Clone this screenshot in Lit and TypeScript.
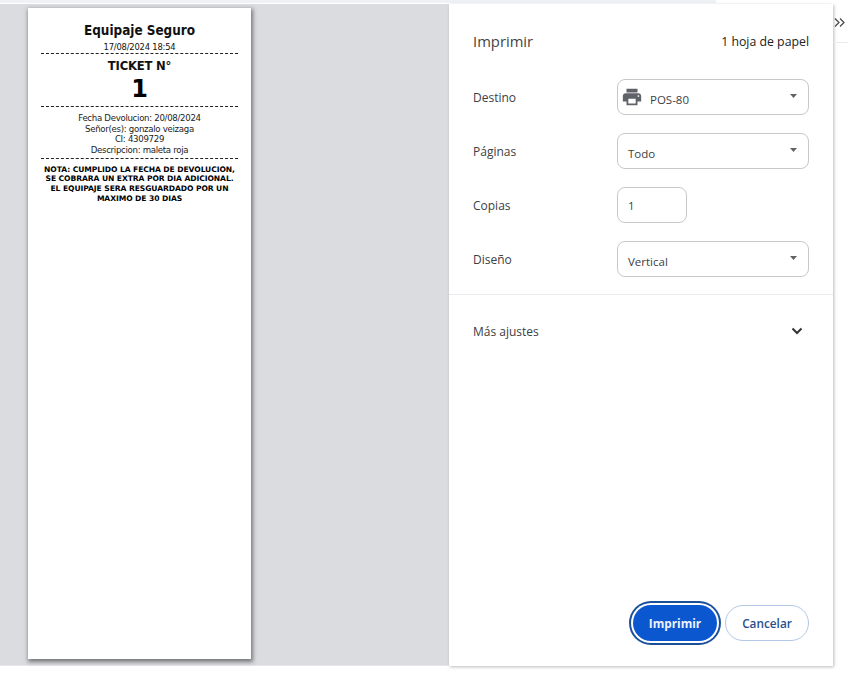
import { LitElement, html, css, svg } from "lit";
import { customElement } from "lit/decorators.js";

const arrow = svg`<svg class="arrow" width="7" height="4" viewBox="0 0 7 4"><path d="M0 0h7L3.5 4z" fill="#5f6368"/></svg>`;

@customElement("app-root")
export class AppRoot extends LitElement {
  static styles = css`
    :host { display: block; width: 848px; height: 673px; background: #fff; overflow: hidden; position: relative; font-family: "Open Sans", "Noto Sans", sans-serif; }
    .topstrip { height: 3px; width: 716px; background: #eef1f6; }
    .main { display: flex; height: 663px; margin-top: 1px; }
    .preview { width: 449px; height: 662px; background: #dadce0; padding: 4px 0 0 28px; box-sizing: border-box; border-bottom: 1px solid #e6e7ea; }
    .paper { width: 223px; height: 651px; background: #fff; box-shadow: 1px 2px 4px 1px rgba(40,40,40,.55); padding-top: 14px; box-sizing: border-box; font-family: "DejaVu Sans", sans-serif; color: #111; text-align: center; }
    .t-title { font-family: "DejaVu Sans Condensed", "DejaVu Sans", sans-serif; font-stretch: condensed; font-size: 13.4px; font-weight: 700; line-height: 18px; }
    .t-date { font-size: 8.4px; line-height: 12px; margin-top: 1px; letter-spacing: -.2px; }
    .dash { border-top: 1px dashed #222; margin: 0 13px; }
    .t-ticket { font-size: 11.6px; font-weight: 700; line-height: 14px; margin-top: 5px; letter-spacing: -.2px; }
    .t-num { font-size: 24px; font-weight: 700; line-height: 28px; margin-top: 2px; margin-bottom: 3px; color: #000; }
    .t-info { font-size: 8.6px; line-height: 10.67px; margin: 6px 0 2px; letter-spacing: -.3px; color: #222; }
    .t-note { font-size: 7.6px; font-weight: 700; line-height: 9.7px; margin-top: 6px; color: #000; letter-spacing: -.08px; }
    .panel { width: 384px; height: 662px; background: #fff; box-shadow: 1px 1px 3px rgba(60,60,60,.35); display: flex; flex-direction: column; box-sizing: border-box; color: #3c4043; font-size: 12px; }
    .head { display: flex; justify-content: space-between; align-items: center; padding: 0 24px; height: 22px; margin-top: 26px; }
    .head h1 { margin: 0; font-size: 14.8px; font-weight: 400; color: #444; }
    .head span { font-size: 12.3px; font-weight: 500; color: #222; }
    .rows { display: flex; flex-direction: column; gap: 18px; padding: 27px 24px 17px; border-bottom: 1px solid #e8eaed; }
    .row { display: flex; align-items: center; height: 36px; }
    .row label { width: 144px; flex: none; }
    .field { height: 34px; border: 1px solid #c6c8cc; border-radius: 8px; display: flex; align-items: center; padding: 0 10px; box-sizing: content-box; width: 170px; color: #3c4043; position: relative; }
    .field .val { padding-top: 5px; font-size: 11.5px; }
    .field.small { width: 48px; }
    .field.small .val { padding-top: 0; }
    .printer { margin-right: 7px; margin-left: -7px; flex: none; }
    .arrow { position: absolute; right: 11px; top: 14px; }
    .more { display: flex; justify-content: space-between; align-items: center; padding: 0 30px 0 24px; margin-top: 24px; height: 24px; }
    .spacer { flex: 1; }
    .buttons { display: flex; justify-content: flex-end; align-items: center; gap: 8px; padding: 0 24px 25px; }
    .btn { height: 36px; border-radius: 18px; box-sizing: border-box; display: flex; align-items: center; justify-content: center; font-size: 11.8px; font-weight: 700; }
    .primary { width: 84px; background: #0b57d0; color: #eef3fe; box-shadow: 0 0 0 2px #fff, 0 0 0 4px #1a4f9c; }
    .secondary { width: 84px; border: 1px solid #b3c6e6; color: #2c4f8f; font-weight: 600; background: #fff; }
    .side { flex: 1; position: relative; }
    .chev { position: absolute; left: 1px; top: 14px; }
    .side .line { position: absolute; left: 0; right: 0; top: 38px; border-top: 1px solid #e8eaed; }
  `;

  row(label: string, content: unknown) {
    return html`<div class="row"><label>${label}</label>${content}</div>`;
  }

  render() {
    return html`
      <div class="topstrip"></div>
      <div class="main">
        <div class="preview">
          <div class="paper">
            <div class="t-title">Equipaje Seguro</div>
            <div class="t-date">17/08/2024 18:54</div>
            <div class="dash"></div>
            <div class="t-ticket">TICKET N°</div>
            <div class="t-num">1</div>
            <div class="dash"></div>
            <div class="t-info">Fecha Devolucion: 20/08/2024<br />Señor(es): gonzalo veizaga<br />CI: 4309729<br />Descripcion: maleta roja</div>
            <div class="dash"></div>
            <div class="t-note">NOTA: CUMPLIDO LA FECHA DE DEVOLUCION,<br />SE COBRARA UN EXTRA POR DIA ADICIONAL.<br />EL EQUIPAJE SERA RESGUARDADO POR UN<br />MAXIMO DE 30 DIAS</div>
          </div>
        </div>
        <div class="panel">
          <div class="head"><h1>Imprimir</h1><span>1 hoja de papel</span></div>
          <div class="rows">
            ${this.row("Destino", html`<div class="field">
              <svg class="printer" width="22" height="22" viewBox="0 0 24 24"><path fill="#5f6368" d="M19 8H5c-1.66 0-3 1.34-3 3v6h4v4h12v-4h4v-6c0-1.66-1.34-3-3-3zm-3 11H8v-5h8v5zm3-7c-.55 0-1-.45-1-1s.45-1 1-1 1 .45 1 1-.45 1-1 1zm-1-9H6v4h12V3z"/></svg>
              <span class="val">POS-80</span>${arrow}</div>`)}
            ${this.row("Páginas", html`<div class="field"><span class="val">Todo</span>${arrow}</div>`)}
            ${this.row("Copias", html`<div class="field small"><span class="val">1</span></div>`)}
            ${this.row("Diseño", html`<div class="field"><span class="val">Vertical</span>${arrow}</div>`)}
          </div>
          <div class="more"><span>Más ajustes</span>
            <svg width="12" height="8" viewBox="0 0 12 8"><path d="M1.5 1.5 6 6l4.5-4.5" fill="none" stroke="#333" stroke-width="2"/></svg>
          </div>
          <div class="spacer"></div>
          <div class="buttons">
            <div class="btn primary">Imprimir</div>
            <div class="btn secondary">Cancelar</div>
          </div>
        </div>
        <div class="side">
          <svg class="chev" width="11" height="9" viewBox="0 0 11 9"><path d="M1 .5 5 4.5 1 8.5M6 .5l4 4-4 4" fill="none" stroke="#444" stroke-width="1.2"/></svg>
          <div class="line"></div>
        </div>
      </div>
    `;
  }
}
